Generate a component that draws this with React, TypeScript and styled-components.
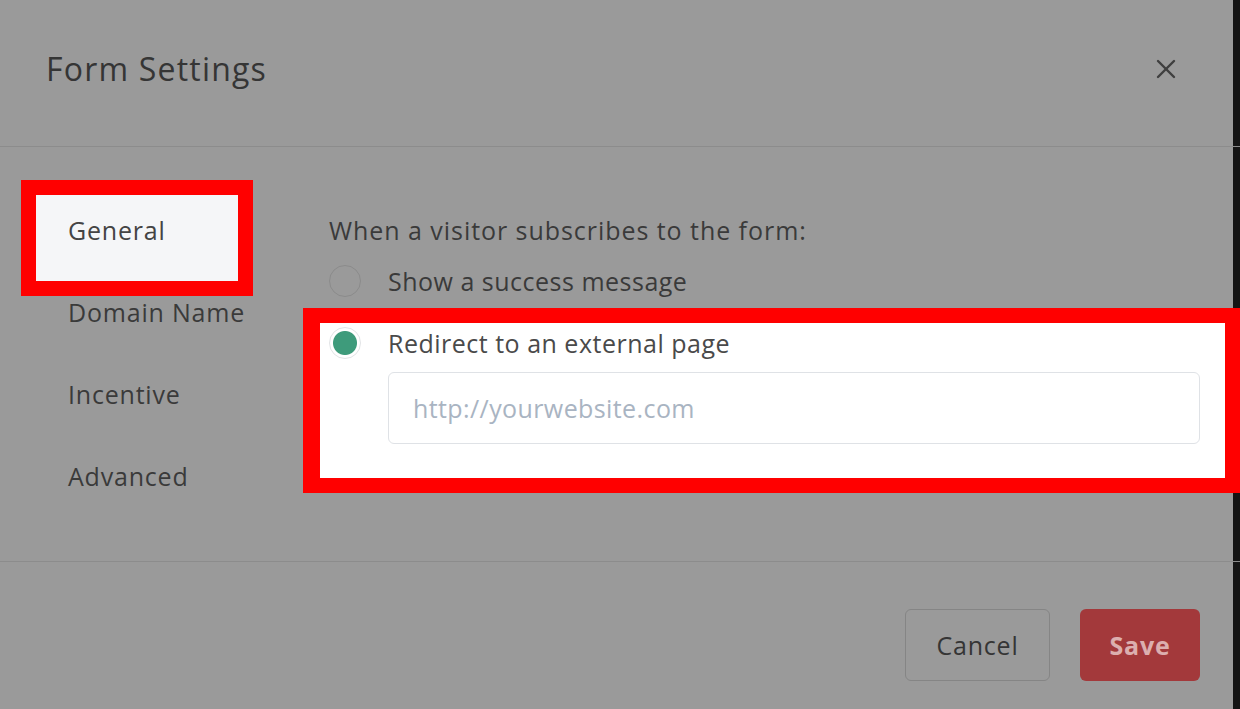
import React from 'react'
import styled, { createGlobalStyle } from 'styled-components'

const GlobalStyle = createGlobalStyle`
  html, body {
    margin: 0;
    padding: 0;
    background: #9a9a9a;
  }
  body {
    font-family: 'Open Sans', 'Liberation Sans', sans-serif;
  }
  * {
    box-sizing: border-box;
  }
`

const Modal = styled.div`
  width: 1240px;
  height: 709px;
  display: flex;
  flex-direction: column;
  background: #9a9a9a;
  box-shadow: inset -7px 0 0 #141414;
  overflow: hidden;
  color: #3a3a3a;
  letter-spacing: 0.8px;
`

const Header = styled.header`
  flex: none;
  height: 147px;
  display: flex;
  align-items: center;
  justify-content: space-between;
  padding: 0 63px 8px 46px;
  border-bottom: 1px solid #8c8c8c;
`

const Title = styled.h1`
  margin: 0;
  font-size: 32px;
  font-weight: 400;
  letter-spacing: 1.2px;
  line-height: 1;
  color: #353535;
`

const CloseButton = styled.button`
  width: 22px;
  height: 22px;
  padding: 0;
  border: none;
  background: none;
  display: flex;
  cursor: pointer;
`

const Body = styled.div`
  flex: 1;
  display: flex;
  padding: 0 40px 0 36px;
`

const Nav = styled.nav`
  width: 202px;
  flex: none;
  padding-top: 42px;
  display: flex;
  flex-direction: column;
`

const NavItem = styled.div<{ $active?: boolean }>`
  position: relative;
  z-index: 0;
  height: 82px;
  display: flex;
  align-items: center;
  padding-left: 32px;
  font-size: 25px;
  white-space: nowrap;
  color: ${(p) => (p.$active ? '#444' : '#3a3a3a')};

  ${(p) =>
    p.$active &&
    `
    &::before {
      content: '';
      position: absolute;
      inset: 6px 0 -10px 0;
      background: #f5f6f8;
      outline: 15px solid #ff0000;
      z-index: -1;
    }
  `}
`

const Content = styled.div`
  flex: 1;
  margin-left: 91px;
  padding-top: 63px;
  display: flex;
  flex-direction: column;
`

const Question = styled.p`
  margin: 0;
  font-size: 25px;
  line-height: 40px;
  letter-spacing: 0.95px;
`

const RadioRow = styled.label<{ $spaced?: boolean }>`
  height: 40px;
  display: flex;
  align-items: center;
  gap: 27px;
  font-size: 25px;
  letter-spacing: 0.5px;
  margin-top: ${(p) => (p.$spaced ? '11px' : '0')};
`

const Radio = styled.span<{ $checked?: boolean }>`
  width: 32px;
  height: 32px;
  border-radius: 50%;
  flex: none;
  border: ${(p) => (p.$checked ? '1px solid #e2e4e6' : '1.5px solid #8b8b8b')};
  background: ${(p) =>
    p.$checked ? 'radial-gradient(circle, #3e9b7b 0 11.5px, #ffffff 12.5px)' : 'transparent'};
`

const Highlight = styled.div`
  position: relative;
  margin: 22px -25px 0 -9px;
  padding: 0 25px 34px 9px;
  background: #ffffff;
  outline: 15px solid #ff0000;
  box-shadow: -2px 0 0 15px #ff0000;
  color: #4a4a4a;
  display: flex;
  flex-direction: column;
`

const UrlInput = styled.input`
  margin: 9px 0 0 59px;
  height: 72px;
  border: 1.5px solid #dfe2e6;
  border-radius: 6px;
  padding: 0 0 0 24px;
  font-family: inherit;
  font-size: 25px;
  letter-spacing: 0.4px;
  color: #4a4a4a;
  background: #fff;
  outline: none;

  &::placeholder {
    color: #a9b4c2;
  }
`

const Footer = styled.footer`
  flex: none;
  height: 148px;
  border-top: 1px solid #8c8c8c;
  display: flex;
  justify-content: flex-end;
  align-items: flex-start;
  gap: 30px;
  padding: 47px 40px 0 0;
`

const Button = styled.button<{ $primary?: boolean }>`
  height: 72px;
  width: ${(p) => (p.$primary ? '120px' : '145px')};
  border-radius: 6px;
  font-family: inherit;
  font-size: 25px;
  letter-spacing: 0.8px;
  font-weight: ${(p) => (p.$primary ? 700 : 400)};
  color: ${(p) => (p.$primary ? '#dcafaf' : '#353535')};
  background: ${(p) => (p.$primary ? '#a3393b' : 'transparent')};
  border: ${(p) => (p.$primary ? 'none' : '1.5px solid #858585')};
  cursor: pointer;
`

const CloseIcon = () => (
  <svg width="22" height="22" viewBox="0 0 22 22" fill="none" stroke="#3f3f3f" strokeWidth="2.4" strokeLinecap="round">
    <line x1="3" y1="3" x2="19" y2="19" />
    <line x1="19" y1="3" x2="3" y2="19" />
  </svg>
)

const navItems = ['General', 'Domain Name', 'Incentive', 'Advanced']

export default function App() {
  return (
    <>
      <GlobalStyle />
      <Modal>
        <Header>
          <Title>Form Settings</Title>
          <CloseButton aria-label="Close">
            <CloseIcon />
          </CloseButton>
        </Header>
        <Body>
          <Nav>
            {navItems.map((item, i) => (
              <NavItem key={item} $active={i === 0}>
                {item}
              </NavItem>
            ))}
          </Nav>
          <Content>
            <Question>When a visitor subscribes to the form:</Question>
            <RadioRow $spaced>
              <Radio />
              Show a success message
            </RadioRow>
            <Highlight>
              <RadioRow>
                <Radio $checked />
                Redirect to an external page
              </RadioRow>
              <UrlInput placeholder="http://yourwebsite.com" />
            </Highlight>
          </Content>
        </Body>
        <Footer>
          <Button>Cancel</Button>
          <Button $primary>Save</Button>
        </Footer>
      </Modal>
    </>
  )
}
